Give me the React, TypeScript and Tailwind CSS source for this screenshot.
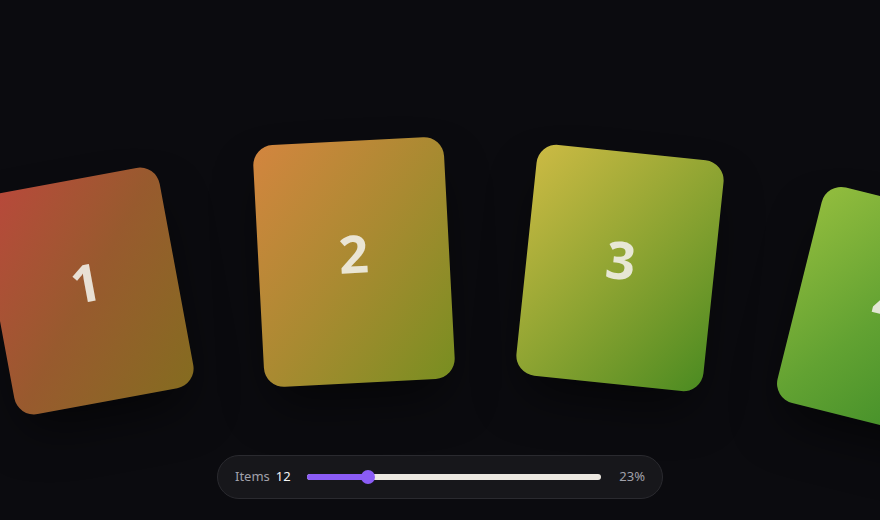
import React from 'react';

type Card = {
  n: number;
  cls: string;
};

// cards sit on a curved track, each one placed by its centre point
const cards: Card[] = [
  {
    n: 1,
    cls: 'left-[87px] top-[291px] w-[182px] h-[224px] rotate-[-10.5deg] from-[#bb463c] via-[#985a2e] to-[#846c1f]',
  },
  {
    n: 2,
    cls: 'left-[354px] top-[262px] w-[191px] h-[242px] rotate-[-3deg] from-[#d3853f] via-[#a98a31] to-[#778e20]',
  },
  {
    n: 3,
    cls: 'left-[620px] top-[268px] w-[188px] h-[232px] rotate-[6deg] from-[#ccba44] via-[#8ea432] to-[#4a8b21]',
  },
  {
    n: 4,
    cls: 'left-[886px] top-[312px] w-[178px] h-[222px] rotate-[14deg] from-[#93bd3e] via-[#62a232] to-[#388a27]',
  },
];

const App: React.FC = () => {
  const [count] = React.useState(12);
  const pct = 23;

  return (
    <div className="relative w-[880px] h-[520px] overflow-hidden bg-[#0b0b0f] flex flex-col items-center justify-end pb-[21px] font-['Noto_Sans',sans-serif]">
      {/* Carousel stage */}
      <div className="absolute inset-0">
        {cards.map(card => (
          <div
            key={card.n}
            className={`absolute -translate-x-1/2 -translate-y-1/2 rounded-[20px] bg-linear-to-br shadow-2xl shadow-black/60 flex items-center justify-center pb-[18px] ${card.cls}`}
          >
            <span className="text-[52px] leading-none font-bold text-[#f1eee7]/90 font-['Open_Sans',sans-serif]">
              {card.n}
            </span>
          </div>
        ))}
      </div>

      {/* Controls */}
      <div className="relative w-[446px] h-[44px] rounded-full bg-[#17171b] border border-[#2a2a2f] flex items-center px-[17px] gap-[16px]">
        <div className="flex items-center gap-[6px] text-[13px]">
          <span className="text-[#a1a1aa]">Items</span>
          <span className="text-[#f4f4f5]">{count}</span>
        </div>
        <div className="relative w-[294px] h-[6px] rounded-full bg-[#ece8e1]">
          <div className="absolute left-0 top-0 h-full rounded-full bg-[#8b5cf6]" style={{ width: `${(61 / 294) * 100}%` }} />
          <div className="absolute top-1/2 -translate-y-1/2 -translate-x-1/2 w-[14px] h-[14px] rounded-full bg-[#8b5cf6]" style={{ left: `${(61 / 294) * 100}%` }} />
        </div>
        <span className="ml-auto text-[13px] text-[#a1a1aa]">{pct}%</span>
      </div>
    </div>
  );
};

export default App;
